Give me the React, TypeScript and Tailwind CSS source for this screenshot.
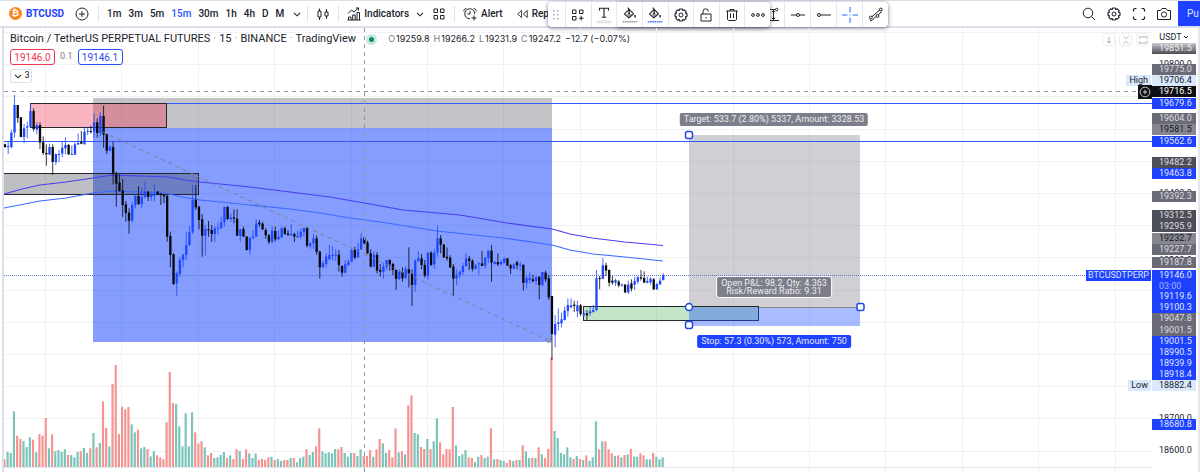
import React from "react";
import clsx from "clsx";

// [high, bodyTop, bodyBottom, low], y grows downwards, in thirds of a pixel.
type Bar = [number, number, number, number];

const series: { offset: number; bars: Bar[] }[] = [
  {
    offset: 255,
    bars: [
      [176, 178, 186, 188], [170, 183, 185, 207], [135, 143, 186, 190], [30, 60, 143, 158],
      [60, 60, 99, 114], [96, 97, 156, 156], [117, 130, 156, 175], [110, 124, 128, 160],
      [55, 78, 126, 128], [70, 78, 132, 140], [112, 120, 134, 148], [112, 120, 173, 192],
      [154, 172, 204, 210], [178, 204, 208, 242], [176, 186, 209, 210], [178, 186, 231, 270],
      [205, 207, 231, 240], [195, 207, 210, 232], [170, 188, 206, 216], [157, 180, 190, 208],
      [177, 180, 208, 210], [182, 207, 209, 210], [172, 178, 209, 210], [146, 174, 178, 180],
      [138, 170, 176, 178], [128, 140, 178, 178], [125, 138, 140, 150], [122, 138, 140, 146],
      [85, 112, 140, 158], [100, 112, 144, 158], [82, 93, 144, 154], [62, 93, 150, 188],
      [145, 148, 197, 207], [180, 186, 197, 198], [170, 186, 265, 298], [260, 268, 296, 365],
      [268, 292, 318, 320], [282, 316, 360, 396], [348, 358, 384, 410], [370, 383, 407, 446],
      [350, 360, 407, 412], [328, 333, 360, 370], [304, 333, 357, 360], [308, 336, 357, 368],
      [290, 320, 336, 340], [318, 320, 336, 348], [318, 328, 336, 348], [298, 326, 332, 348],
      [318, 320, 328, 330], [324, 326, 330, 360], [328, 330, 334, 355],
    ],
  },
  {
    offset: 480,
    bars: [
      [105, 108, 230, 245], [215, 228, 285, 322], [280, 283, 372, 375], [335, 340, 370, 408],
      [292, 300, 342, 350], [282, 284, 300, 322], [215, 255, 285, 300], [198, 217, 255, 258],
      [75, 120, 217, 222], [75, 120, 142, 150], [138, 140, 180, 208], [162, 178, 227, 290],
      [195, 207, 227, 286], [183, 208, 210, 230], [195, 210, 222, 245], [198, 205, 222, 246],
      [188, 203, 206, 222], [170, 187, 204, 208], [139, 141, 187, 200], [138, 141, 177, 180],
      [160, 172, 177, 186], [148, 172, 176, 190], [148, 176, 227, 228], [206, 208, 228, 245],
      [200, 207, 230, 230], [228, 230, 270, 272], [230, 234, 270, 284], [211, 230, 234, 238],
      [178, 190, 230, 230], [180, 188, 193, 200], [186, 191, 208, 210], [204, 210, 226, 236],
      [222, 226, 246, 252], [198, 212, 246, 250], [200, 213, 238, 244], [212, 230, 238, 240],
      [200, 205, 232, 234], [200, 205, 222, 224], [210, 220, 224, 228], [192, 222, 226, 228],
      [218, 222, 230, 246], [212, 228, 232, 234], [205, 216, 230, 236], [202, 204, 216, 230],
      [200, 203, 257, 262], [246, 250, 258, 266], [222, 235, 250, 266], [226, 235, 276, 284],
      [272, 275, 322, 356], [302, 310, 322, 324], [280, 290, 312, 322],
    ],
  },
  {
    offset: 630,
    bars: [
      [105, 135, 148, 150], [108, 135, 138, 152], [118, 134, 136, 152], [120, 134, 165, 185],
      [165, 168, 188, 200], [150, 163, 188, 190], [148, 155, 165, 168], [115, 120, 155, 155],
      [110, 120, 143, 148], [98, 118, 142, 143], [70, 85, 118, 120], [78, 83, 100, 106],
      [92, 97, 130, 132], [118, 130, 170, 172], [125, 134, 170, 172], [126, 134, 182, 190],
      [162, 180, 185, 200], [158, 170, 186, 206], [150, 150, 170, 180], [148, 150, 163, 182],
      [158, 162, 180, 195], [178, 180, 207, 240], [178, 186, 207, 210], [172, 186, 205, 215],
      [170, 176, 204, 208], [112, 178, 190, 232], [178, 192, 225, 288], [148, 152, 225, 245],
      [124, 145, 153, 156], [132, 145, 165, 178], [150, 165, 197, 202], [126, 128, 197, 208],
      [124, 128, 165, 168], [118, 128, 163, 176], [47, 85, 128, 140], [75, 85, 104, 130],
      [102, 104, 142, 144], [112, 140, 145, 152], [136, 143, 172, 174], [162, 170, 206, 258],
      [178, 194, 205, 225], [182, 185, 194, 206], [158, 168, 186, 195], [130, 146, 168, 170],
      [138, 145, 153, 180], [148, 152, 177, 184], [162, 166, 176, 180], [156, 160, 163, 196],
      [123, 160, 168, 168], [142, 143, 167, 176], [120, 122, 144, 158], [105, 122, 158, 215],
      [152, 156, 162, 164], [130, 156, 163, 168], [150, 156, 162, 168], [145, 145, 158, 160],
      [144, 145, 167, 168], [162, 166, 175, 192], [160, 164, 176, 178], [152, 157, 166, 178],
      [155, 164, 166, 182], [162, 165, 219, 242], [195, 205, 219, 236], [188, 204, 210, 220],
      [194, 208, 213, 218], [198, 202, 213, 224], [200, 200, 225, 268], [185, 186, 225, 230],
      [182, 188, 208, 216], [195, 205, 262, 270], [258, 258, 372, 450],
    ],
  },
  {
    offset: 690,
    bars: [
      [255, 282, 314, 352], [235, 277, 282, 302], [248, 268, 280, 292], [230, 242, 270, 272],
      [205, 225, 243, 260], [205, 226, 232, 234], [212, 224, 228, 246], [212, 226, 244, 262],
      [222, 226, 252, 258], [240, 250, 256, 260], [240, 250, 256, 272], [230, 244, 250, 258],
      [225, 240, 246, 248], [120, 145, 240, 244], [138, 144, 147, 178], [84, 106, 146, 148],
      [98, 106, 122, 138], [118, 120, 158, 170], [138, 152, 158, 164], [146, 150, 158, 168],
      [150, 155, 166, 172], [160, 164, 167, 170], [162, 164, 187, 190], [152, 164, 187, 192],
      [148, 160, 176, 184], [140, 153, 164, 180], [138, 142, 155, 162], [120, 142, 146, 152],
      [124, 144, 158, 158], [140, 153, 158, 160], [142, 146, 157, 164], [144, 148, 178, 180],
      [158, 162, 178, 180], [142, 152, 163, 165], [130, 136, 150, 152],
    ],
  },
];

const candles = series.flatMap(({ offset, bars }) =>
  bars.map((bar) => bar.map((y) => y + offset))
);

// Negative volume marks a falling bar.
const volumes = [
  -23, 45, 42, 167, -94, -84, 78, 60, 89, -82, 44, -99, -94, -147, 56, -98, 47, 51, 45, 53,
  -36, 36, 29, 45, -47, 57, 42, -56, 102, -59, 72, -197, -117, 62, -249, -306, -99, -181, -173, -180,
  128, 104, -112, 56, 60, -54, 32, 48, -35, -29, -23, -134, -285, -192, 189, 122, 62, 161, 62, 164,
  -104, -70, -77, 59, -35, -42, 27, 29, 36, 45, -27, 35, -24, -53, 48, -24, -53, 41, 27, 41,
  -21, -24, -21, -29, 31, -21, 24, 18, -21, -21, 27, -27, 14, 27, 31, -53, 36, 45, -62, -116,
  47, 41, 44, 41, 54, -53, -60, 42, 31, 42, -42, 33, 53, -33, -33, -51, 31, -53, -84, 71,
  42, -51, -29, -116, 44, -47, 38, -185, -215, 102, 98, -60, -54, 84, -54, 77, 146, -74, -38, -54,
  -53, -180, 65, 33, 38, 51, -29, -27, 15, 31, -36, 27, 31, -116, 23, -24, 21, 18, -12, -21,
  18, -21, 21, -65, 47, 27, -27, 27, -59, 38, -27, -54, -329, 108, 87, 42, 38, 59, 29, -24,
  33, -24, 21, -35, 18, 29, 137, -53, 77, -77, -53, -41, 33, -35, 29, -36, 38, -54, 31, 31,
  -41, -35, 23, 23, -42, 31, 23, 29,
];

const barX = (index: number) => 15 + index * 9.54;

const gridX = Array.from({ length: 15 }, (_, i) => Math.round(45 + i * 76.4) + 0.5);
const gridY = Array.from({ length: 14 }, (_, i) => Math.round(32 + i * 32.2) + 0.5);

type PriceTag = { value: string; className: string };

const row = "h-[11px] leading-[11px]";
const dark = clsx(row, "bg-[#4c4d57] text-[#dcdde0]");
const gray = clsx(row, "bg-[#6a6b76] text-[#dcdde0]");
const mid = clsx(row, "bg-[#868790] text-[#17181c]");
const blue = clsx(row, "bg-[#1e40ff] text-[#dfe6ff]");
const light = clsx(row, "bg-[#d9e9fb] text-[#20222b]");
const plain = "overflow-hidden leading-[11px] text-[#20222b]";

const priceTags: PriceTag[] = [
  { value: "19851.5", className: clsx(row, "bg-linear-to-b from-[#c9cace] to-[#4c4d57] text-[#f1f1f3]") },
  { value: "19800.0", className: clsx(plain, "mt-[5px] h-[5px]") },
  { value: "19775.0", className: gray },
  { value: "19706.4", className: light },
  { value: "19716.5", className: clsx(row, "bg-[#0d0f14] text-white") },
  { value: "19679.6", className: clsx(blue, "mt-px") },
  { value: "19604.0", className: clsx(gray, "mt-[4px]") },
  { value: "19581.5", className: mid },
  { value: "19562.6", className: clsx(blue, "mt-px") },
  { value: "19482.2", className: clsx(dark, "mt-[10px]") },
  { value: "19463.8", className: blue },
  { value: "19400.0", className: clsx(plain, "mt-[9px] h-[3px]") },
  { value: "19392.3", className: gray },
  { value: "19312.5", className: clsx(dark, "mt-[8px]") },
  { value: "19295.9", className: dark },
  { value: "19232.7", className: clsx(mid, "mt-px") },
  { value: "19227.7", className: gray },
  { value: "19200.0", className: clsx(plain, "h-[2px]") },
  { value: "19187.8", className: gray },
  { value: "19146.0", className: clsx(blue, "mt-[2px]") },
  { value: "03:00", className: "h-[10px] bg-[#1e40ff] leading-[10px] text-[#a3b3ff]" },
  { value: "19119.6", className: blue },
  { value: "19100.3", className: blue },
  { value: "19047.8", className: gray },
  { value: "19001.5", className: "h-[12px] bg-[#6a6b76] leading-[12px] text-[#dcdde0]" },
  { value: "19001.5", className: blue },
  { value: "18990.5", className: blue },
  { value: "18939.9", className: blue },
  { value: "18918.4", className: blue },
  { value: "18882.4", className: light },
  { value: "18700.0", className: clsx(plain, "mt-[22px] h-[6px]") },
  { value: "18680.8", className: blue },
  { value: "18600.0", className: clsx(plain, "mt-[15px] h-[11px]") },
];

const Icon = ({
  children,
  className = "size-4",
}: {
  children: React.ReactNode;
  className?: string;
}) => (
  <svg
    viewBox="0 0 16 16"
    fill="none"
    stroke="currentColor"
    strokeWidth="1"
    className={clsx("shrink-0", className)}
    aria-hidden="true"
  >
    {children}
  </svg>
);

const Chevron = () => (
  <Icon className="size-3">
    <path d="M4 6.500L8 10.500l4-4" strokeWidth="1.400" />
  </Icon>
);

const Gear = () => (
  <Icon>
    <path
      d="M6.800 2h2.400l.6 1.500 1.500-.6 1.800 1.800-.6 1.500 1.500.6v2.400l-1.500.6.6 1.500-1.800 1.800-1.500-.6-.6 1.500H6.800l-.6-1.500-1.500.6-1.800-1.800.6-1.500L2 9.200V6.800l1.500-.6-.6-1.500 1.800-1.800 1.500.6z"
      strokeLinejoin="round"
      strokeWidth="1.200"
    />
    <circle cx="8" cy="8" r="2" />
  </Icon>
);

const Bucket = ({ color }: { color: string }) => (
  <Icon className="size-[18px]">
    <path d="M3 7.200L7.200 3l4 4-4.200 3.600z" strokeLinejoin="round" strokeWidth=".9" />
    <path d="M6 1.500l1.200 1.500v3.200" strokeWidth=".9" />
    <path d="M4.500 7.200h6.300L7 10.400z" fill="currentColor" fillOpacity=".45" stroke="none" />
    <circle cx="7.200" cy="6.400" r=".9" fill="currentColor" stroke="none" />
    <path d="M12.500 8v2.200" strokeWidth="1.300" />
    <path d="M1.500 14h13" stroke={color} strokeWidth="1.500" strokeDasharray="1.500 .5" />
  </Icon>
);

const Divider = () => <span className="h-4 w-px bg-[#e0e3eb]" />;

const intervals = ["1m", "3m", "5m", "15m", "30m", "1h", "4h", "D", "M"];

const Header = () => (
  <header className="flex h-[28px] items-center overflow-hidden border-t border-b-2 border-[#dddfeb] bg-white pl-[9px] whitespace-nowrap">
    <button className="flex items-center gap-[4px] text-[10px] font-bold text-[#1e40ff]">
      <span className="flex size-[13px] items-center justify-center rounded-full bg-[#f7861b] text-[9px] text-white">
        ₿
      </span>
      <span>BTCUSD</span>
    </button>
    <button aria-label="Compare" className="ml-[10px]">
      <Icon className="size-[16px]">
        <circle cx="8" cy="8" r="6" />
        <path d="M8 5v6M5 8h6" />
      </Icon>
    </button>
    <span className="ml-[8px] flex">
      <Divider />
    </span>
    <nav className="ml-[8px] flex items-center gap-[7px] text-[10px] font-medium">
      {intervals.map((item) => (
        <button key={item} className={clsx(item === "15m" && "text-[#1e53ff]")}>
          {item}
        </button>
      ))}
      <button aria-label="More intervals">
        <Chevron />
      </button>
    </nav>
    <div className="ml-[4px] flex items-center gap-[7px] text-[10px] font-medium">
      <Divider />
      <button aria-label="Bar style">
        <Icon>
          <path d="M3 5h3v6H3zM4.500 2.500V5M4.500 11v3M10 6h3v4h-3zM11.500 3v3M11.500 10v3" />
        </Icon>
      </button>
      <Divider />
      <button className="flex items-center gap-[2px]">
        <Icon>
          <path d="M2.500 14v-3h2.500v3M6.700 14V9h2.500v5M11 14V6.500h2.500V14M1.500 14h13M2 7.500l3.500-3.500 2.500 2 4.500-4M10 2h2.500v2.500" />
        </Icon>
        Indicators
      </button>
      <button aria-label="Favorite indicators" className="-mx-[2px]">
        <Chevron />
      </button>
      <button aria-label="Templates">
        <Icon>
          <path d="M3 3h3.500v3.500H3zM9.500 3H13v3.500H9.500zM3 9.500h3.500V13H3zM9.500 9.500H13V13H9.500z" />
        </Icon>
      </button>
      <Divider />
      <button className="flex items-center gap-[3px]">
        <Icon>
          <path d="M12.800 8A5 5 0 1 0 8 12.800M8 5v3H5.500M2 5.500C1.500 4 2.500 2.500 4.500 2.500M11.500 2.500c2 0 3 1.500 2.500 3M12 9.500v5M9.500 12h5" />
        </Icon>
        Alert
      </button>
      <button className="ml-[5px] flex items-center gap-[3px]">
        <Icon className="size-[14px]">
          <path d="M7.500 4L3 8l4.500 4zM14 4L9.500 8l4.500 4z" strokeLinejoin="round" />
        </Icon>
        Replay
      </button>
    </div>
    <div className="ml-auto flex items-center gap-[9px] pr-[6px]">
      <button aria-label="Search">
        <Icon>
          <circle cx="7" cy="7" r="4.800" />
          <path d="M10.500 10.500L14 14" />
        </Icon>
      </button>
      <button aria-label="Settings">
        <Gear />
      </button>
      <button aria-label="Fullscreen">
        <Icon>
          <path d="M2.500 5.500v-2l1-1h2M10.500 2.500h2l1 1v2M13.500 10.500v2l-1 1h-2M5.500 13.500h-2l-1-1v-2" strokeWidth="1.200" />
        </Icon>
      </button>
      <button aria-label="Snapshot">
        <Icon>
          <path d="M1.500 4.500h3L6 2.500h4l1.500 2h3v9h-13z" strokeLinejoin="round" />
          <circle cx="8" cy="8.500" r="2.600" />
        </Icon>
      </button>
    </div>
    <button className="h-full w-[22px] bg-[#1e40ff] pl-[9px] text-left text-[10px] text-[#dfe6ff]">Pu</button>
  </header>
);

const ToolCell = ({ label, children }: { label: string; children: React.ReactNode }) => (
  <button
    aria-label={label}
    className="flex h-full min-w-0 flex-1 items-center justify-center border-l border-[#e6e8f0]"
  >
    {children}
  </button>
);

const FloatingToolbars = () => (
  <>
    <div className="absolute top-[2px] left-[616px] flex h-[25px] w-[272px] rounded-[4px] bg-white pl-[142px] shadow-[0_1px_4px_rgba(30,34,60,0.6)]">
      <ToolCell label="Price range">
        <Icon>
          <path d="M4 2.500h7M4 13.500h11M9.500 3.500v9M7.800 5.200l1.700-1.700 1.700 1.700M7.800 10.800l1.700 1.700 1.700-1.700" />
          <circle cx="12.700" cy="2.500" r="1.200" />
        </Icon>
      </ToolCell>
      <ToolCell label="Horizontal line">
        <Icon>
          <path d="M1 8h5.500M9.500 8H15" />
          <circle cx="8" cy="8" r="1.500" />
        </Icon>
      </ToolCell>
      <ToolCell label="Horizontal ray">
        <Icon>
          <path d="M4.500 8H15" />
          <circle cx="3" cy="8" r="1.500" />
        </Icon>
      </ToolCell>
      <ToolCell label="Cross line">
        <Icon className="size-4 text-[#2962ff]">
          <path d="M8 0v5.500M8 10.500V16M0 8h5.500M10.500 8H16M7.500 8h1" />
        </Icon>
      </ToolCell>
      <ToolCell label="Parallel channel">
        <Icon>
          <path d="M3.500 10L12.500 2.500M3 14l11-9.500M2 12.500l1 1.500" />
          <circle cx="2.800" cy="10.500" r="1.400" fill="#fff" />
          <circle cx="12.800" cy="2.500" r="1.400" fill="#fff" />
          <circle cx="9.500" cy="9" r="1.400" fill="#fff" />
        </Icon>
      </ToolCell>
    </div>
    <div className="absolute top-[2px] left-[548px] flex h-[25px] w-[222px] items-center rounded-[4px] bg-white shadow-[0_1px_4px_rgba(30,34,60,0.6)]">
      <svg width="17" height="12" viewBox="0 0 17 12" fill="#a5a8b3" className="shrink-0" aria-hidden="true">
        {[2, 6, 10].map((y) =>
          [6, 10].map((x) => <rect key={`${x}-${y}`} x={x - 1} y={y - 1} width="1.500" height="1.500" />)
        )}
      </svg>
      <ToolCell label="Templates">
        <Icon>
          <path d="M2.500 3H6v3.500H2.500zM9.500 3H13v3.500H9.500zM2.500 9.500H6V13H2.500zM11.200 9v4.500M9 11.200h4.500" />
        </Icon>
      </ToolCell>
      <ToolCell label="Text color">
        <Icon className="size-[18px]">
          <path d="M4 4V2h8v2M8 2v8M6 10h4" />
          <path d="M2 13.300h12v1.400H2z" stroke="#c9cbd3" strokeWidth=".6" />
        </Icon>
      </ToolCell>
      <ToolCell label="Target color">
        <Bucket color="#9a9ba3" />
      </ToolCell>
      <ToolCell label="Stop color">
        <Bucket color="#5478ff" />
      </ToolCell>
      <ToolCell label="Settings">
        <Gear />
      </ToolCell>
      <ToolCell label="Lock">
        <Icon>
          <path d="M3 7h10v7H3zM5 7V4.500a2.700 2.700 0 0 1 5.400 0M8 10v1.500" strokeLinejoin="round" />
        </Icon>
      </ToolCell>
      <ToolCell label="Remove">
        <Icon>
          <path d="M2 4h12M6 4V2.500h4V4M3.500 4v8.500l1 1h7l1-1V4M6.500 6.500v4.500M9.500 6.500v4.500" />
        </Icon>
      </ToolCell>
      <ToolCell label="More">
        <Icon>
          <circle cx="3" cy="8" r="1.400" />
          <circle cx="8" cy="8" r="1.400" />
          <circle cx="13" cy="8" r="1.400" />
        </Icon>
      </ToolCell>
    </div>
  </>
);

const Handle = ({ x, y, round = false }: { x: number; y: number; round?: boolean }) => (
  <rect
    x={x - 3.5}
    y={y - 3.5}
    width="7"
    height="7"
    rx={round ? 3.5 : 2}
    fill="#fff"
    stroke="#1e48e0"
    strokeWidth="1.5"
  />
);

const Chart = () => (
  <svg className="absolute inset-0 size-full" role="img" aria-label="BTCUSDT 15 minute chart">
    <svg x="-4" y="-28" width="100%" height="100%" overflow="visible">
      <g stroke="#f0f1f5">
        {gridX.map((x) => (
          <line key={x} x1={x} x2={x} y1="28" y2="500" />
        ))}
        {gridY.map((y) => (
          <line key={y} x1="4" x2="200%" y1={y} y2={y} />
        ))}
      </g>

      {/* volume */}
      <g transform="scale(0.33333)">
        {volumes.map((volume, i) => (
          <rect
            key={i}
            x={barX(i) - 5}
            y={1401 - Math.abs(volume)}
            width="6.500"
            height={Math.abs(volume)}
            fill={volume > 0 ? "#79c4ba" : "#f49390"}
          />
        ))}
      </g>
      <rect x="4" y="467" width="200%" height="1" fill="#e4e6ee" />

      {/* zones */}
      <rect x="93" y="98" width="459" height="30" fill="#70717c" fillOpacity=".42" />
      <rect x="93" y="128" width="459" height="214" fill="#093bff" fillOpacity=".5" />
      <rect x="30.500" y="103.500" width="136" height="24" fill="#f23650" fillOpacity=".36" stroke="#26272e" />
      <rect x="-10" y="173.500" width="208.500" height="21" fill="#40424c" fillOpacity=".34" stroke="#26272e" />
      <rect x="689" y="135" width="171" height="172" fill="#70717c" fillOpacity=".33" />
      <rect x="583.500" y="306.500" width="175" height="14" fill="#4caf50" fillOpacity=".33" stroke="#26272e" />
      <rect x="689" y="307" width="171" height="19" fill="#1e50ff" fillOpacity=".38" />
      <path d="M759 307.500h101" stroke="#85868e" />

      {/* levels */}
      <line x1="167" x2="200%" y1="103.500" y2="103.500" stroke="#3558ff" strokeWidth="1.200" />
      <line x1="4" x2="200%" y1="141.500" y2="141.500" stroke="#3558ff" strokeWidth="1.200" />
      <line x1="4" x2="200%" y1="275.500" y2="275.500" stroke="#5f78d8" strokeDasharray="1 1" />

      {/* moving averages */}
      <g fill="none" strokeLinejoin="round" strokeWidth="1.200">
        <polyline
          stroke="#4a3ff0"
          points="4,194 22,189 40,185 66,182 93,178 112,175 140,176 168,177 185,180 200,182 250,187 290,192 330,197 370,204 403,210 460,215 507,223 552,229 570,234 592,238 625,242 663,245.500"
        />
        <polyline
          stroke="#3a6bff"
          points="4,208 40,201 66,198 93,193 112,191 140,192 165,193 182,197 200,200 250,205 290,209 320,213 350,218 387,223 437,231 503,238 552,245 570,250 593,254 625,257 663,261"
        />
      </g>

      {/* candles */}
      <g transform="scale(0.33333)">
        {candles.map(([high, top, bottom, low], i) => {
          const fill = volumes[i] > 0 ? "#1e48ff" : "#08090d";
          return (
            <g key={i} fill={fill}>
              <rect x={barX(i) - 1.5} y={high} width="3" height={low - high} fillOpacity=".8" />
              <rect x={barX(i) - 3.5} y={top} width="7" height={Math.max(bottom - top, 3)} />
            </g>
          );
        })}
      </g>

      <path d="M103 132L552 342" stroke="#7d7f88" strokeDasharray="4 4" />
      <path d="M547 342h5l-3-4" fill="none" stroke="#7d7f88" />
      <line x1="364.500" x2="364.500" y1="28" y2="472" stroke="#92959f" strokeDasharray="4 4" />
      <line x1="4" x2="200%" y1="91.500" y2="91.500" stroke="#92959f" strokeDasharray="4 4" />

      <Handle x={689} y={135} />
      <Handle x={689} y={307} round />
      <Handle x={860.5} y={307} />
      <Handle x={689} y={325} />
    </svg>
  </svg>
);

const ohlc = [
  ["O", "19259.8"],
  ["H", "19266.2"],
  ["L", "19231.9"],
  ["C", "19247.2"],
];

const Legend = () => (
  <div className="relative flex flex-col items-start pt-[3px] pl-[6px] whitespace-nowrap">
    <div className="flex h-[16px] items-center">
      <h1 className="flex gap-[3px] text-[11px]">
        Bitcoin / TetherUS PERPETUAL FUTURES
        <span className="text-[#9598a1]">·</span>15
        <span className="text-[#9598a1]">·</span>BINANCE
        <span className="text-[#9598a1]">·</span>TradingView
      </h1>
      <span className="ml-[10px] flex size-[11px] items-center justify-center rounded-full bg-[#c5e9e0]">
        <span className="size-[5px] rounded-full bg-[#0c8a6c]" />
      </span>
      <p className="ml-[11px] flex gap-[4px] font-[Inter,sans-serif] text-[9px]">
        {ohlc.map(([key, value]) => (
          <span key={key} className="flex gap-px">
            <span className="text-[#787b86]">{key}</span>
            {value}
          </span>
        ))}
        <span>−12.7 (−0.07%)</span>
      </p>
    </div>
    <div className="mt-[2px] flex items-center gap-[5px] text-[10px]">
      <button className="h-[16px] w-[45px] rounded-[3px] border border-[#f23650] bg-white text-[#f23650]">
        19146.0
      </button>
      <span className="text-[9px] text-[#787b86]">0.1</span>
      <button className="h-[16px] w-[45px] rounded-[3px] border border-[#2950f5] bg-white text-[#2950f5]">
        19146.1
      </button>
    </div>
    <button className="mt-[4px] flex h-[14px] w-[22px] items-center justify-center rounded-[2px] border border-[#dddfe8] bg-white text-[9px]">
      <Chevron />3
    </button>
  </div>
);

const PaneButton = ({ label, path }: { label: string; path: string }) => (
  <button
    aria-label={label}
    className="flex size-[13px] items-center justify-center rounded-[3px] border border-[#eceef3] bg-white text-[#a9acb6]"
  >
    <Icon className="size-[10px]">
      <path d={path} strokeWidth="1.500" />
    </Icon>
  </button>
);

export default function App() {
  return (
    <div className="relative flex min-h-screen flex-col overflow-hidden bg-white font-[Roboto,'Liberation_Sans',sans-serif] text-[#20222b]">
      <Header />
      <FloatingToolbars />
      <main className="flex flex-1">
        <div className="w-[4px] border-r-2 border-[#dddfeb]" />
        <section className="relative min-w-0 flex-1 overflow-hidden">
          <Chart />
          <Legend />

          <div className="absolute top-[5px] right-[3px] flex gap-[4px]">
            <PaneButton label="Move pane down" path="M8 3v10M4.500 9.500L8 13l3.500-3.500" />
            <PaneButton label="Collapse pane" path="M4 2l4 4 4-4M4 14l4-4 4 4" />
            <PaneButton label="Maximize pane" path="M2 6V3h12v3M2 10v3h12v-3" />
          </div>

          <p className="absolute top-[85px] left-[770px] -translate-x-1/2 rounded-[2px] bg-[#7c7e89] px-[4px] text-[9px] leading-[13px] whitespace-nowrap text-[#eeeef1]">
            Target: 533.7 (2.80%) 5337, Amount: 3328.53
          </p>
          <p className="absolute top-[248px] left-[770px] -translate-x-1/2 rounded-[3px] border border-white bg-[#7c7e89] px-[4px] py-[2px] text-center text-[9px] leading-[8px] whitespace-nowrap text-[#eeeef1]">
            Open P&amp;L: 98.2, Qty: 4.363
            <br />
            Risk/Reward Ratio: 9.31
          </p>
          <p className="absolute top-[307px] left-[770px] -translate-x-1/2 rounded-[2px] bg-[#1e40ff] px-[4px] text-[9px] leading-[13px] whitespace-nowrap text-[#e3e9ff]">
            Stop: 57.3 (0.30%) 573, Amount: 750
          </p>

          <span className="absolute top-[47px] right-px bg-[#d9e9fb] px-[3px] text-[9px] leading-[11px]">High</span>
          <span className="absolute top-[57px] right-0 flex size-[14px] items-center justify-center bg-[#0d0f14] text-white">
            <Icon className="size-[12px]">
              <circle cx="8" cy="8" r="6.500" />
              <path d="M8 5v6M5 8h6" />
            </Icon>
          </span>
          <span className="absolute top-[242px] right-px bg-[#1e40ff] px-[2px] text-[9px] leading-[11px] text-[#dfe6ff]">
            BTCUSDTPERP
          </span>
          <span className="absolute top-[352px] right-px bg-[#d9e9fb] px-[3px] text-[9px] leading-[11px]">Low</span>
        </section>
        <aside className="w-[48px] border-r-2 border-[#e4e6ee] bg-white pr-[2px] text-[9px]">
          <button className="flex h-[15px] w-full items-end justify-center pt-[3px] text-[9px] leading-[12px]">
            USDT
            <svg width="7" height="12" viewBox="0 0 7 12" fill="none" stroke="currentColor" aria-hidden="true">
              <path d="M2 5l2 2 2-2" />
            </svg>
          </button>
          <ul>
            {priceTags.map(({ value, className }, i) => (
              <li key={i} className={clsx("pl-[7px]", className)}>
                {value}
              </li>
            ))}
          </ul>
        </aside>
      </main>
    </div>
  );
}
